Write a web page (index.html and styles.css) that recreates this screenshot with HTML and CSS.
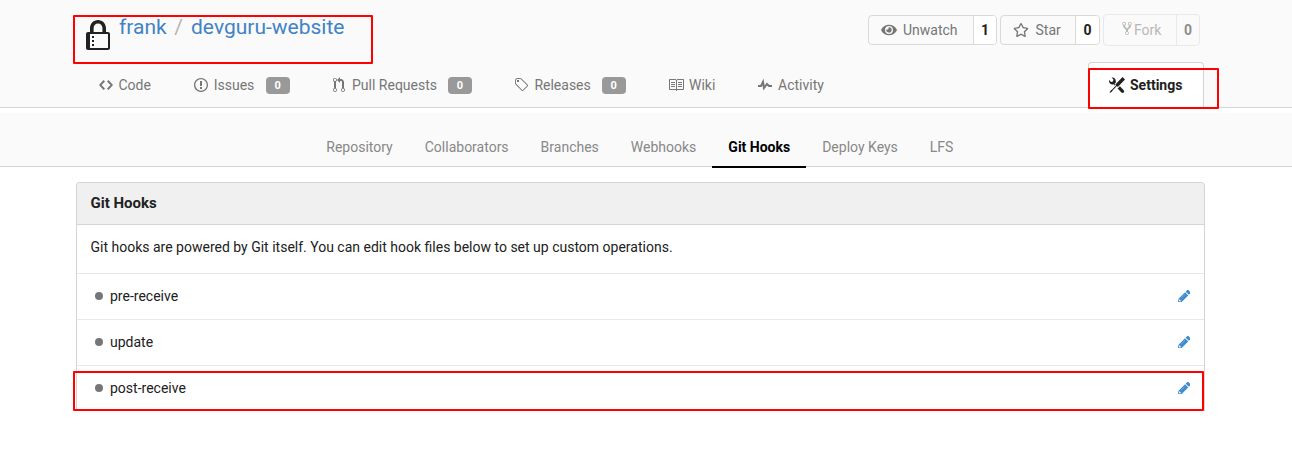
FILE: index.html
```html
<!DOCTYPE html>
<html lang="en">
<head>
<meta charset="utf-8">
<title>frank/devguru-website</title>
<link rel="stylesheet" href="styles.css">
</head>
<body>
<svg class="sprite"><symbol id="pencil" viewBox="0 0 512 512"><path d="M497.9 142.1l-46.1 46.1c-4.7 4.7-12.3 4.7-17 0l-111-111c-4.7-4.7-4.7-12.3 0-17l46.1-46.1c18.7-18.7 49.1-18.7 67.9 0l60.1 60.1c18.8 18.7 18.8 49.1 0 67.9zM290 94L21.6 362.4.4 483.9c-2.9 16.4 11.4 30.6 27.8 27.8l121.5-21.3L418 222zM88 434h38v28l-54.500 9.600-31.100-31.100L48 390H88v44z"/><path class="shine" d="M135 325L285 175"/></symbol></svg>
<header class="repo-header">
  <div class="container title-row">
    <svg class="lock" viewBox="0 0 12 16"><path fill-rule="evenodd" d="M4 13H3v-1h1v1zm8-6v7c0 .55-.45 1-1 1H1c-.55 0-1-.45-1-1V7c0-.55.45-1 1-1h1V4c0-2.2 1.8-4 4-4s4 1.8 4 4v2h1c.55 0 1 .45 1 1zM3.8 6h4.41V4c0-1.22-.98-2.2-2.2-2.2-1.22 0-2.2.98-2.2 2.2v2H3.8zM11 7H2v7h9V7zM4 8H3v1h1V8zm0 2H3v1h1v-1z"/></svg>
    <h1 class="repo-title"><a>frank</a><span class="divider">/</span><a>devguru-website</a></h1>
    <div class="actions">
      <div class="button watch"><span class="main"><svg class="fa" viewBox="0 0 576 512"><path d="M572.52 241.4C518.29 135.59 410.93 64 288 64S57.68 135.64 3.48 241.41a32.35 32.35 0 0 0 0 29.19C57.71 376.41 165.07 448 288 448s230.32-71.64 284.52-177.41a32.35 32.35 0 0 0 0-29.19zM288 400a144 144 0 1 1 144-144 143.93 143.93 0 0 1-144 144zm0-240a95.31 95.31 0 0 0-25.31 3.79 47.85 47.85 0 0 1-66.9 66.9A95.78 95.78 0 1 0 288 160z"/></svg>Unwatch</span><span class="count">1</span></div>
      <div class="button star"><span class="main"><svg class="fa" viewBox="0 0 576 512"><path d="M528.1 171.5L382 150.2 316.7 17.8c-11.7-23.6-45.6-23.9-57.4 0L194 150.2 47.9 171.5c-26.2 3.8-36.7 36.1-17.7 54.6l105.7 103-25 145.5c-4.5 26.3 23.2 46 46.4 33.7L288 439.6l130.7 68.7c23.2 12.2 50.9-7.4 46.4-33.7l-25-145.5 105.7-103c19-18.5 8.5-50.8-17.7-54.6zM388.6 312.3l23.7 138.4L288 385.4l-124.3 65.3 23.7-138.4-100.6-98 139-20.2 62.2-126 62.2 126 139 20.2-100.6 98z"/></svg>Star</span><span class="count">0</span></div>
      <div class="button fork"><span class="main"><svg class="fork-icon" viewBox="0 0 10 16"><path fill-rule="evenodd" d="M8 1a1.993 1.993 0 0 0-1 3.72V6L5 8 3 6V4.72A1.993 1.993 0 0 0 2 1a1.993 1.993 0 0 0-1 3.72V6.5l3 3v1.78A1.993 1.993 0 0 0 5 15a1.993 1.993 0 0 0 1-3.72V9.5l3-3V4.72A1.993 1.993 0 0 0 8 1zM2 4.2C1.34 4.2.8 3.65.8 3c0-.65.55-1.2 1.2-1.2.65 0 1.2.55 1.2 1.2 0 .65-.55 1.2-1.2 1.2zm3 10c-.66 0-1.2-.55-1.2-1.2 0-.65.55-1.2 1.2-1.2.65 0 1.2.55 1.2 1.2 0 .65-.55 1.2-1.2 1.2zm3-10c-.66 0-1.2-.55-1.2-1.2 0-.65.55-1.2 1.2-1.2.65 0 1.2.55 1.2 1.2 0 .65-.55 1.2-1.2 1.2z"/></svg>Fork</span><span class="count">0</span></div>
    </div>
  </div>
  <nav class="container tabs">
    <a class="tab code"><svg class="w14" viewBox="0 0 14 16"><path d="M9.5 3L8 4.5 11.5 8 8 11.5 9.5 13 14 8 9.5 3zm-5 0L0 8l4.5 5L6 11.5 2.5 8 6 4.5 4.5 3z"/></svg>Code</a>
    <a class="tab issues"><svg class="w14" viewBox="0 0 14 16"><path fill-rule="evenodd" d="M7 2.3c3.14 0 5.7 2.56 5.7 5.7s-2.56 5.7-5.7 5.7A5.71 5.71 0 0 1 1.3 8c0-3.14 2.56-5.7 5.7-5.7zM7 1C3.14 1 0 4.14 0 8s3.14 7 7 7 7-3.14 7-7-3.14-7-7-7zm1 3H6v5h2V4zm0 6H6v2h2v-2z"/></svg>Issues<span class="badge">0</span></a>
    <a class="tab pulls"><svg class="w12" viewBox="0 0 12 16"><path fill-rule="evenodd" d="M11 11.28V5c-.03-.78-.34-1.47-.94-2.06C9.46 2.35 8.78 2.03 8 2H7V0L4 3l3 3V4h1c.27.02.48.11.69.31.21.2.3.42.31.69v6.28A1.993 1.993 0 0 0 10 15a1.993 1.993 0 0 0 1-3.72zm-1 2.92c-.66 0-1.2-.55-1.2-1.2 0-.65.55-1.2 1.2-1.2.65 0 1.2.55 1.2 1.2 0 .65-.55 1.2-1.2 1.2zM4 3c0-1.11-.89-2-2-2a1.993 1.993 0 0 0-1 3.72v6.56A1.993 1.993 0 0 0 2 15a1.993 1.993 0 0 0 1-3.72V4.72c.59-.34 1-.98 1-1.72zm-.8 10c0 .66-.55 1.2-1.2 1.2-.65 0-1.2-.55-1.2-1.2 0-.65.55-1.2 1.2-1.2.65 0 1.2.55 1.2 1.2zM2 4.2C1.34 4.2.8 3.65.8 3c0-.65.55-1.2 1.2-1.2.65 0 1.2.55 1.2 1.2 0 .65-.55 1.2-1.2 1.2z"/></svg>Pull Requests<span class="badge">0</span></a>
    <a class="tab releases"><svg class="w14" viewBox="0 0 14 16"><path fill-rule="evenodd" d="M7.73 1.73C7.26 1.26 6.62 1 5.96 1H3.5C2.13 1 1 2.13 1 3.5v2.47c0 .66.27 1.3.73 1.77l6.06 6.06c.39.39 1.02.39 1.41 0l4.59-4.59a.996.996 0 0 0 0-1.41L7.73 1.73zM2.38 7.09c-.31-.3-.47-.7-.47-1.13V3.5c0-.88.72-1.59 1.59-1.59h2.47c.42 0 .83.16 1.13.47l6.14 6.13-4.73 4.73-6.13-6.15zM3.01 3h2v2H3V3h.01z"/></svg>Releases<span class="badge">0</span></a>
    <a class="tab wiki"><svg class="w16" viewBox="0 0 16 16"><path fill-rule="evenodd" d="M3 5h4v1H3V5zm0 3h4V7H3v1zm0 2h4V9H3v1zm11-5h-4v1h4V5zm0 2h-4v1h4V7zm0 2h-4v1h4V9zm2-6v9c0 .55-.45 1-1 1H9.5l-1 1-1-1H2c-.55 0-1-.45-1-1V3c0-.55.45-1 1-1h5.5l1 1 1-1H15c.55 0 1 .45 1 1zm-8 .5L7.5 3H2v9h6V3.5zm7-.5H9.5l-.5.5V12h6V3z"/></svg>Wiki</a>
    <a class="tab activity"><svg class="w14" viewBox="0 0 14 16"><path d="M11.5 8L8.8 5.4 6.6 8.5 5.5 1.6 2.38 8H0v2h3.6l.9-1.8.9 5.4L9 8.5l1.6 1.5H14V8h-2.5z"/></svg>Activity</a>
    <a class="tab settings"><svg class="w16" viewBox="0 0 16 16"><path fill-rule="evenodd" d="M4.48 7.27c.26.26 1.28 1.33 1.28 1.33l.56-.58-.88-.91 1.69-1.8s-.76-.74-.43-.45c.32-1.19.03-2.51-.87-3.44C4.93.5 3.66.2 2.52.51l1.93 2-.51 1.96-1.89.52-1.93-1.99C-.19 4.17.1 5.48 1 6.4c.94.98 2.29 1.26 3.48.87zm6.44 1.94l-2.33 2.3 3.84 3.98c.31.33.73.49 1.14.49.41 0 .82-.16 1.14-.49.63-.65.63-1.7 0-2.35l-3.79-3.93zM16 2.53L13.55 0 6.33 7.46l.88.91-4.31 4.46-.99.53-1.39 2.27.35.37 2.2-1.44.51-1.02L7.9 9.08l.88.91L16 2.53z"/></svg>Settings</a>
  </nav>
</header>
<nav class="subnav">
  <a>Repository</a><a>Collaborators</a><a>Branches</a><a>Webhooks</a><a class="active">Git Hooks</a><a>Deploy Keys</a><a>LFS</a>
</nav>
<main class="container panel">
  <h2 class="panel-title">Git Hooks</h2>
  <p class="row intro">Git hooks are powered by Git itself. You can edit hook files below to set up custom operations.</p>
  <div class="row hook"><i class="dot"></i>pre-receive<svg class="pencil"><use href="#pencil"/></svg></div>
  <div class="row hook"><i class="dot"></i>update<svg class="pencil"><use href="#pencil"/></svg></div>
  <div class="row hook"><i class="dot"></i>post-receive<svg class="pencil"><use href="#pencil"/></svg></div>
</main>
<div class="mark mark-title"></div>
<div class="mark mark-settings"></div>
<div class="mark mark-hook"></div>
</body>
</html>
```

FILE: styles.css
```css
* { box-sizing: border-box; }
body {
  margin: 0;
  height: 458px;
  overflow: hidden;
  position: relative;
  background: #fff;
  color: #212121;
  font: 14px/20px Roboto, "Liberation Sans", sans-serif;
}
svg { fill: currentColor; flex: none; display: block; }
.sprite { display: none; }
.container { width: 1129px; margin-left: 76px; }

.repo-header {
  height: 108px;
  background: #fafafa;
  border-bottom: 1px solid #d4d4d5;
}
.title-row { display: flex; height: 62px; padding-left: 10px; }
.lock { width: 24px; height: 32px; margin-top: 20px; }
.repo-title {
  margin: 12px 0 0 9px;
  font-size: 21px;
  line-height: 30px;
  font-weight: 400;
  color: #4183c4;
}
.divider { margin: 0 8px 0 7.7px; color: #b5b5b5; }

.actions { display: flex; align-items: center; gap: 3px; height: 32px; margin: 14px 5px 0 auto; }
.button {
  display: flex;
  height: 30px;
  border: 1px solid #d9d9da;
  border-radius: 4px;
  overflow: hidden;
  color: #767676;
}
.main { display: flex; align-items: center; flex: 1; padding-left: 12px; }
.count {
  width: 24px;
  border-left: 1px solid #d9d9da;
  background: #fff;
  color: #212121;
  font-weight: 700;
  line-height: 28px;
  text-align: center;
}
.fa { width: 16px; height: 14px; margin-right: 6px; }
.watch { width: 129px; }
.watch .count, .fork .count { width: 23px; }
.star { width: 100px; }
.star .fa { margin-right: 6.5px; }
.fork { width: 97px; height: 32px; opacity: .5; }
.fork .main { padding-left: 18px; }
.fork .count { background: none; line-height: 30px; }
.fork-icon { width: 10px; height: 15px; margin: -4px 2px 0 0; }

.tabs { display: flex; height: 46px; padding-left: 23px; }
.tab { display: flex; align-items: center; height: 46px; color: #767676; }
.tab svg { height: 16px; }
.w12 { width: 12px; margin-right: 7px; }
.w14 { width: 14px; margin-right: 6px; }
.w16 { width: 16px; margin-right: 5px; }
.code { width: 95px; }
.code svg { margin-right: 5.5px; }
.issues { width: 139px; }
.issues svg { margin-right: 5.7px; }
.issues .badge { margin-left: 11.3px; }
.pulls { width: 181px; }
.releases { width: 154px; }
.releases svg { margin-right: 6.4px; }
.wiki { width: 90px; }
.badge {
  width: 24px;
  height: 17px;
  margin-left: 11px;
  border-radius: 4px;
  background: #999;
  color: #fff;
  font-size: 11px;
  line-height: 17px;
  font-weight: 700;
  text-align: center;
}
.settings {
  width: 116px;
  margin: 0 1px 0 auto;
  padding: 0 0 1px 20px;
  background: #fff;
  border: 1px solid #d4d4d5;
  border-bottom: 0;
  border-radius: 4px 4px 0 0;
  color: #212121;
  font-weight: 700;
}

.subnav {
  display: flex;
  height: 54px;
  margin-top: 5px;
  padding-left: 310.3px;
  background: #fafafa;
  border-bottom: 1px solid #d4d4d5;
  color: #888;
}
.subnav a { height: 55px; padding: 24px 16px 0; }
.subnav .active { border-bottom: 2px solid #000; color: #000; font-weight: 700; }

.panel {
  height: 229px;
  margin-top: 15px;
  border: 1px solid #d4d4d5;
  border-bottom: 0;
  border-radius: 4px 4px 0 0;
}
.panel-title {
  height: 42px;
  margin: 0;
  padding: 0 13.5px;
  background: #f0f0f0;
  border-bottom: 1px solid #d4d4d5;
  border-radius: 3px 3px 0 0;
  font-size: 15px;
  line-height: 41px;
  font-weight: 700;
}
.row { display: flex; align-items: center; height: 46px; margin: 0; padding: 0 13.5px; border-bottom: 1px solid #e8e8e9; }
.intro { height: 49px; padding-bottom: 4px; }
.hook { padding: 0 14px 2px 18px; }
.hook:last-child { border-bottom: 0; height: 45px; }
.dot { width: 8px; height: 8px; margin-right: 7px; border-radius: 50%; background: #767676; }
.pencil { width: 12.5px; height: 12.5px; margin: 1px 0 0 auto; color: #3e8bcf; }
.shine { fill: none; stroke: #fff; stroke-opacity: .45; stroke-width: 24; }

.mark { position: absolute; border: 2px solid #f00; border-radius: 1px; }
.mark-title { left: 73px; top: 15px; width: 300px; height: 49px; }
.mark-settings { left: 1088px; top: 68px; width: 131px; height: 41px; }
.mark-hook { left: 73px; top: 371px; width: 1131px; height: 40px; }
```
